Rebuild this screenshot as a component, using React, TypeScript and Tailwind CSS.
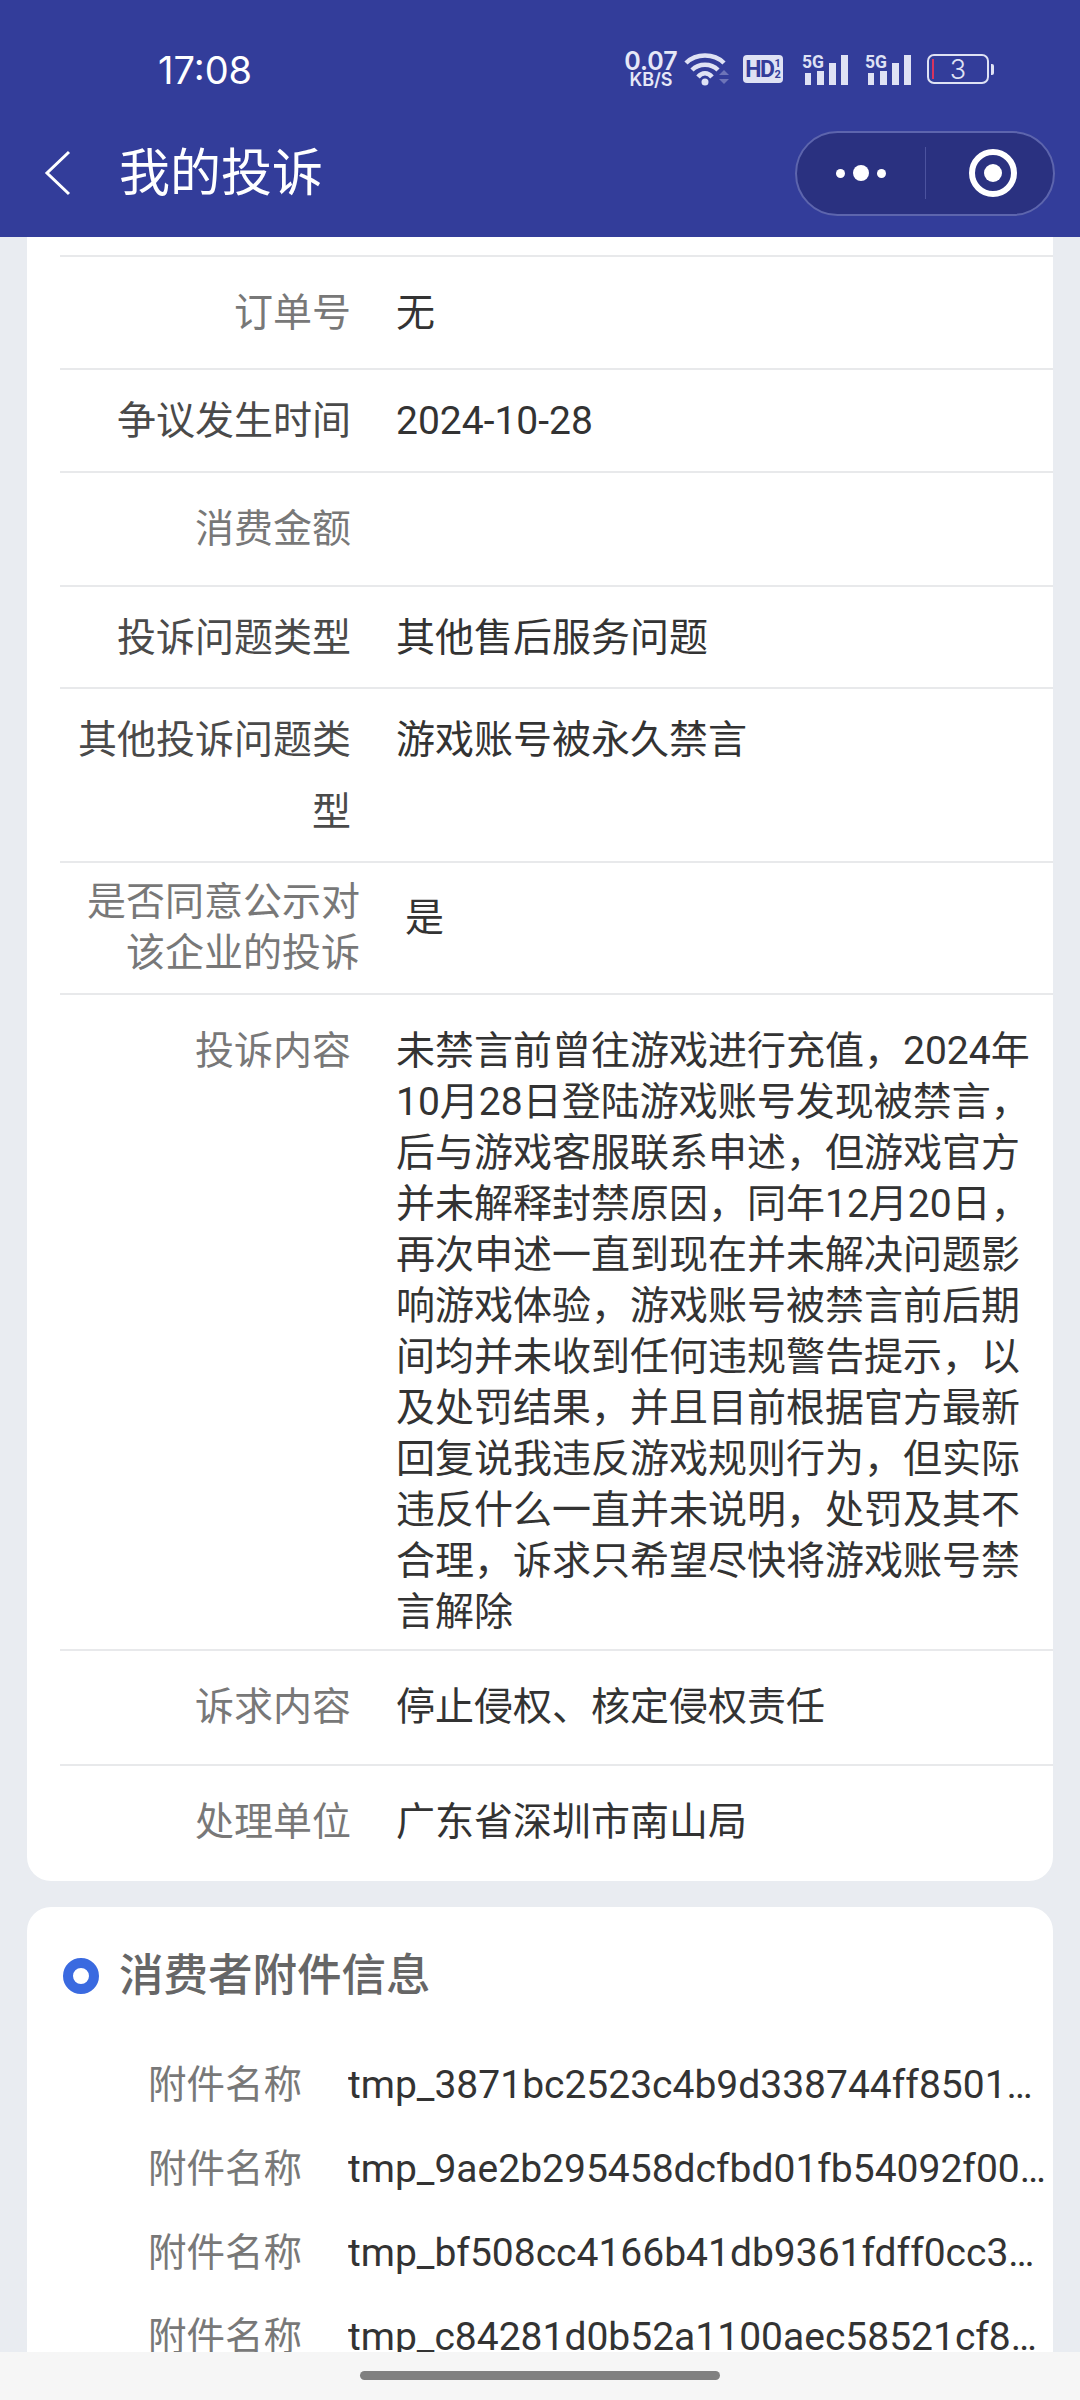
const cjk = "font-['Roboto','Noto_Sans_CJK_SC',sans-serif]";

function Signal({ className }: { className?: string }) {
  return (
    <svg width="47" height="32" viewBox="0 0 47 32" className={`overflow-visible ${className ?? ""}`}>
      <text x="0" y="15" fontSize="19" fontWeight="700" fontFamily="Roboto" fill="#dfe2f4" textLength="22" lengthAdjust="spacingAndGlyphs">5G</text>
      <rect x="3" y="20" width="6" height="12" fill="#dfe2f4" />
      <rect x="15" y="18" width="7" height="14" fill="#dfe2f4" />
      <rect x="27" y="10" width="7" height="22" fill="#dfe2f4" />
      <rect x="39" y="2" width="7" height="30" fill="#dfe2f4" />
    </svg>
  );
}

function StatusBar() {
  return (
    <div className="flex h-[109px] items-end pb-[17px] pl-[158px] pr-[86px] justify-between">
      <span className="text-[38px] leading-[44px] text-white font-['Inter',sans-serif]">17:08</span>
      <div className="flex items-center mb-[5px]">
        <div className="flex w-[50px] flex-col items-center font-['Inter',sans-serif] font-semibold text-[#e6e8f7]">
          <span className="text-[25px] leading-[21px]">0.07</span>
          <span className="text-[18px] leading-[15px]">KB/S</span>
        </div>
        <svg width="46" height="34" viewBox="0 0 46 34" className="ml-[8px]">
          <path d="M2 11 C12 1 30 1 40 11" fill="none" stroke="#dfe2f4" strokeWidth="4.5" />
          <path d="M8 18 C15 11 27 11 34 18" fill="none" stroke="#dfe2f4" strokeWidth="4.5" />
          <path d="M14 25 C18 20 24 20 28 25" fill="none" stroke="#dfe2f4" strokeWidth="4.5" />
          <circle cx="21" cy="30" r="3.5" fill="#dfe2f4" />
          <path d="M40 18 L45 23 L35 23 Z" fill="#6d74b8" />
          <path d="M35 27 L45 27 L40 32 Z" fill="#6d74b8" />
        </svg>
        <div className="ml-[13px] flex h-[28px] w-[40px] items-center justify-center rounded-[4px] bg-[#dfe2f4] font-['Roboto',sans-serif] font-bold text-[#333d9a]">
          <span className="text-[23px] leading-none tracking-[-1.5px]">HD</span>
          <span className="ml-[1px] flex flex-col text-[11px] leading-[11px]">
            <span>1</span>
            <span>2</span>
          </span>
        </div>
        <Signal className="ml-[19px]" />
        <Signal className="ml-[16px]" />
        <div className="ml-[15px] flex h-[30px] w-[62px] items-center justify-center rounded-[7px] border-2 border-[#dfe2f4] relative">
          <div className="absolute left-[3px] top-[3px] h-[20px] w-[2px] bg-[#d8345f]" />
          <span className="text-[27px] leading-none text-[#dfe2f4] font-['Inter',sans-serif] font-light">3</span>
        </div>
        <div className="ml-[2px] h-[11px] w-[3px] rounded-r-[2px] bg-[#dfe2f4]" />
      </div>
    </div>
  );
}

function NavBar() {
  return (
    <div className="flex h-[128px] items-center">
      <svg width="28" height="46" viewBox="0 0 28 46" className="ml-[44px]">
        <path d="M25 2 L3 23 L25 44" fill="none" stroke="#ffffff" strokeWidth="3" />
      </svg>
      <span className={`ml-[47px] pt-[2px] text-[51px] leading-[60px] text-white ${cjk}`}>我的投诉</span>
      <div className="ml-auto mr-[25px] flex h-[85px] w-[260px] items-center rounded-full border-2 border-[#5d65ad] bg-[#2a3180]">
        <div className="flex w-[128px] items-center justify-center gap-[8px]">
          <span className="h-[9px] w-[9px] rounded-full bg-white" />
          <span className="h-[16px] w-[16px] rounded-full bg-white" />
          <span className="h-[9px] w-[9px] rounded-full bg-white" />
        </div>
        <div className="h-[52px] w-px bg-[#4c539f]" />
        <div className="flex flex-1 items-center justify-center pl-[6px]">
          <div className="flex h-[48px] w-[48px] items-center justify-center rounded-full border-[6px] border-white">
            <span className="h-[18px] w-[18px] rounded-full bg-white" />
          </div>
        </div>
      </div>
    </div>
  );
}

type RowProps = {
  label: string;
  children?: React.ReactNode;
  dark?: boolean;
  className?: string;
};

// two row kinds in the picture: grey label with tight lines, dark label with tall lines
function Row({ label, children, dark, className }: RowProps) {
  return (
    <div className={`flex border-b-2 border-[#e8e9eb] last:border-b-0 ${dark ? "leading-[72px]" : "leading-[51px]"} ${className ?? ""}`}>
      <div className={`w-[291px] shrink-0 text-right ${dark ? "text-[#4a4a4a]" : "text-[#787878]"}`}>{label}</div>
      <div className="ml-[45px] min-w-0 flex-1 pr-[17px] text-[#333333]">{children}</div>
    </div>
  );
}

const attachments = [
  "tmp_3871bc2523c4b9d338744ff850194d2a6b1c.png",
  "tmp_9ae2b295458dcfbd01fb54092f00e7c1a3d5.png",
  "tmp_bf508cc4166b41db9361fdff0cc3a8e2d47b.png",
  "tmp_c84281d0b52a1100aec58521cf8e6d90b3f7.png",
];

export default function App() {
  return (
    <div className={`flex h-[2400px] w-[1080px] flex-col overflow-hidden bg-[#e9ecf1] text-[39px] ${cjk}`}>
      <header className="shrink-0 bg-[#333d9a]">
        <StatusBar />
        <NavBar />
      </header>

      <main className="min-h-0 flex-1 overflow-hidden px-[27px]">
        <section className="rounded-b-[24px] bg-white pl-[33px] pt-[18px]">
          <div className="border-t-2 border-[#e8e9eb]" />
          <Row label="订单号" className="pt-[31px] pb-[29px]">无</Row>
          <Row label="争议发生时间" dark className="pt-[15px] pb-[14px]">2024-10-28</Row>
          <Row label="消费金额" className="pt-[31px] pb-[30px]" />
          <Row label="投诉问题类型" dark className="pt-[15px] pb-[13px]">其他售后服务问题</Row>
          <Row label="其他投诉问题类型" dark className="pt-[15px] pb-[13px]">游戏账号被永久禁言</Row>
          <div className="flex border-b-2 border-[#e8e9eb] pt-[14px] pb-[14px] leading-[51px]">
            <div className="w-[300px] shrink-0 text-right text-[#787878]">是否同意公示对该企业的投诉</div>
            <div className="ml-[45px] pt-[16px] text-[#333333]">是</div>
          </div>
          <Row label="投诉内容" className="pt-[31px] pb-[11px]">
            未禁言前曾往游戏进行充值，2024年10月28日登陆游戏账号发现被禁言，后与游戏客服联系申述，但游戏官方并未解释封禁原因，同年12月20日，再次申述一直到现在并未解决问题影响游戏体验，游戏账号被禁言前后期间均并未收到任何违规警告提示，以及处罚结果，并且目前根据官方最新回复说我违反游戏规则行为，但实际违反什么一直并未说明，处罚及其不合理，诉求只希望尽快将游戏账号禁言解除
          </Row>
          <Row label="诉求内容" className="pt-[31px] pb-[31px]">停止侵权、核定侵权责任</Row>
          <Row label="处理单位" className="pt-[31px] pb-[33px]">广东省深圳市南山局</Row>
        </section>

        <section className="mt-[26px] rounded-t-[24px] bg-white pl-[36px] pt-[40px]">
          <div className="flex h-[58px] items-center">
            <span className="h-[36px] w-[36px] rounded-full border-[10px] border-[#3a6ae0]" />
            <h2 className="ml-[20px] text-[44.5px] font-medium text-[#666666]">消费者附件信息</h2>
          </div>
          <div className="mt-[38px]">
            {attachments.map((name) => (
              <div key={name} className="flex h-[84px] items-center">
                <div className="w-[239px] shrink-0 text-right text-[38.5px] text-[#787878]">附件名称</div>
                <div className="ml-[46px] min-w-0 flex-1 truncate pr-[6px] text-[#333333]">{name}</div>
              </div>
            ))}
          </div>
        </section>
      </main>

      <footer className="flex h-[48px] shrink-0 justify-center bg-[#f6f6f6] pt-[19px]">
        <div className="h-[9px] w-[360px] rounded-full bg-[#808080]" />
      </footer>
    </div>
  );
}
